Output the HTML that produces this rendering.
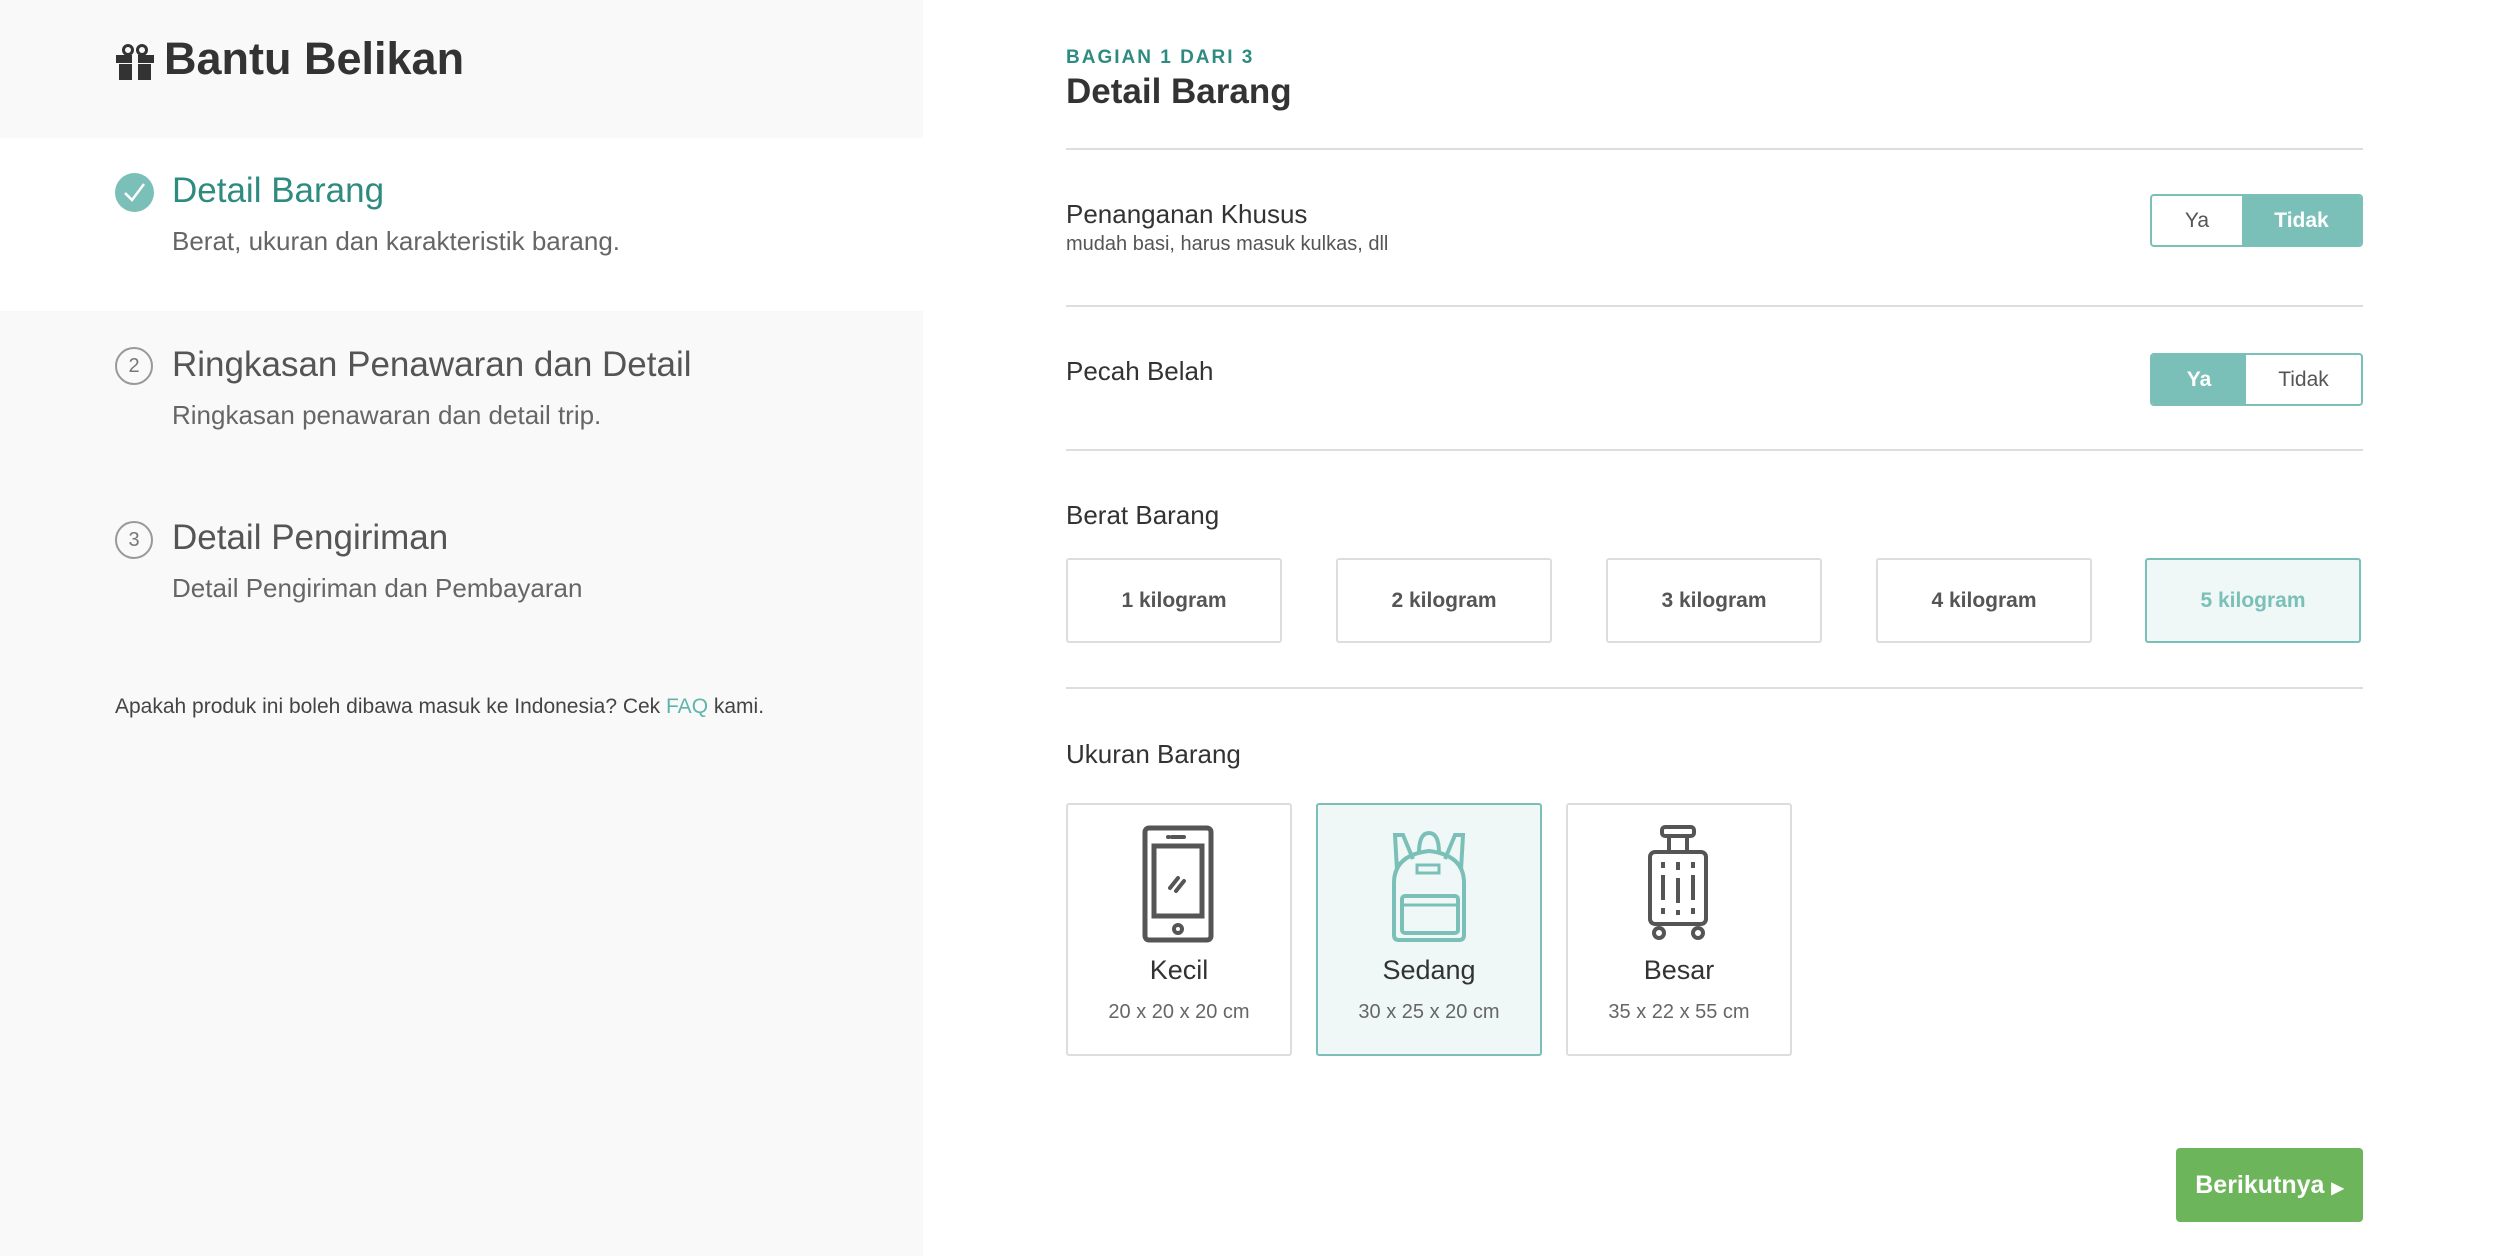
<!DOCTYPE html>
<html><head><meta charset="utf-8"><style>
*{margin:0;padding:0;box-sizing:border-box}
body{width:2514px;height:1256px;position:relative;background:#fff;font-family:"Liberation Sans",sans-serif;color:#333;overflow:hidden}
.a{position:absolute;white-space:nowrap}
.left{position:absolute;left:0;top:0;width:923px;height:1256px;background:#f9f9f9}
.act{position:absolute;left:0;top:138px;width:923px;height:173px;background:#fff}
.st{font-size:35px;color:#555}
.sub{font-size:26px;color:#666}
.num{position:absolute;width:38px;height:38px;border:2px solid #999;border-radius:50%;font-size:20px;color:#777;text-align:center;line-height:34px}
.hr{position:absolute;left:1066px;width:1297px;height:2px;background:#ddd}
.lbl{font-size:26px;color:#333}
.tg{position:absolute;left:2150px;width:213px;height:53px;border:2px solid #7bc0b8;border-radius:4px;overflow:hidden;display:flex;font-size:21px}
.tg div{text-align:center;line-height:49px;color:#555}
.tg .on{background:#7bc0b8;color:#fff;font-weight:bold}
.kg{position:absolute;top:558px;width:216px;height:85px;border:2px solid #ddd;border-radius:3px;text-align:center;line-height:81px;font-size:21px;font-weight:bold;color:#555}
.card{position:absolute;top:803px;width:226px;height:253px;border:2px solid #ddd;border-radius:3px;text-align:center}
.card .n{position:absolute;top:150px;left:0;right:0;font-size:27px;color:#333}
.card .d{position:absolute;top:196px;left:0;right:0;font-size:20px;color:#666}
.card svg{position:absolute;top:20px;left:50%;margin-left:-40px}
</style></head><body>
<div class="left"></div>
<div class="act"></div>
<svg class="a" style="left:115px;top:44px" width="40" height="36" viewBox="0 0 40 36"><rect x="1" y="11" width="38" height="8" fill="#333"/><rect x="4" y="20" width="32" height="16" fill="#333"/><rect x="17" y="11" width="6" height="25" fill="#f9f9f9"/><circle cx="13" cy="6" r="4.5" fill="none" stroke="#333" stroke-width="3"/><circle cx="27" cy="6" r="4.5" fill="none" stroke="#333" stroke-width="3"/></svg>
<div class="a" style="left:164px;top:33px;font-size:45px;font-weight:bold;color:#333">Bantu Belikan</div>
<svg class="a" style="left:115px;top:173px" width="39" height="39" viewBox="0 0 39 39"><circle cx="19.5" cy="19.5" r="19.5" fill="#7bc0b8"/><path d="M10 20 L17 27 L29 11" fill="none" stroke="#fff" stroke-width="2.5"/></svg>
<div class="a st" style="left:172px;top:171px;color:#2e8b80">Detail Barang</div>
<div class="a sub" style="left:172px;top:226px">Berat, ukuran dan karakteristik barang.</div>
<div class="num" style="left:115px;top:347px">2</div>
<div class="a st" style="left:172px;top:345px">Ringkasan Penawaran dan Detail</div>
<div class="a sub" style="left:172px;top:400px">Ringkasan penawaran dan detail trip.</div>
<div class="num" style="left:115px;top:521px">3</div>
<div class="a st" style="left:172px;top:518px">Detail Pengiriman</div>
<div class="a sub" style="left:172px;top:573px">Detail Pengiriman dan Pembayaran</div>
<div class="a" style="left:115px;top:695px;font-size:21px;color:#444">Apakah produk ini boleh dibawa masuk ke Indonesia? Cek <span style="color:#5fb5ab">FAQ</span> kami.</div>

<div class="a" style="left:1066px;top:47px;font-size:19px;font-weight:bold;color:#2e8b80;letter-spacing:2px">BAGIAN 1 DARI 3</div>
<div class="a" style="left:1066px;top:72px;font-size:35px;font-weight:bold;color:#333">Detail Barang</div>
<div class="hr" style="top:148px"></div>
<div class="a lbl" style="left:1066px;top:199px">Penanganan Khusus</div>
<div class="a" style="left:1066px;top:233px;font-size:20px;color:#555">mudah basi, harus masuk kulkas, dll</div>
<div class="tg" style="top:194px"><div style="width:90px">Ya</div><div class="on" style="flex:1">Tidak</div></div>
<div class="hr" style="top:305px"></div>
<div class="a lbl" style="left:1066px;top:356px">Pecah Belah</div>
<div class="tg" style="top:353px"><div class="on" style="width:94px">Ya</div><div style="flex:1">Tidak</div></div>
<div class="hr" style="top:449px"></div>
<div class="a lbl" style="left:1066px;top:500px">Berat Barang</div>
<div class="kg" style="left:1066px">1 kilogram</div>
<div class="kg" style="left:1336px">2 kilogram</div>
<div class="kg" style="left:1606px">3 kilogram</div>
<div class="kg" style="left:1876px">4 kilogram</div>
<div class="kg" style="left:2145px;border-color:#7bc0b8;background:#eff8f7;color:#7bc0b8">5 kilogram</div>
<div class="hr" style="top:687px"></div>
<div class="a lbl" style="left:1066px;top:739px">Ukuran Barang</div>

<div class="card" style="left:1066px"><svg width="80" height="118" viewBox="0 0 80 118"><rect x="6" y="3" width="66" height="112" rx="4" fill="none" stroke="#555" stroke-width="5"/><rect x="15" y="21" width="48" height="70" fill="none" stroke="#555" stroke-width="5"/><circle cx="39" cy="104" r="4" fill="none" stroke="#555" stroke-width="4"/><path d="M33 12h12M29 12h1" stroke="#555" stroke-width="4" stroke-linecap="round"/><path d="M31 63l8-10M37 66l8-10" stroke="#555" stroke-width="4" stroke-linecap="round"/></svg><div class="n">Kecil</div><div class="d">20 x 20 x 20 cm</div></div>
<div class="card" style="left:1316px;border-color:#7bc0b8;background:#eff8f7"><svg width="80" height="118" viewBox="0 0 80 118"><path d="M5 110V58Q5 30 40 26Q75 30 75 58V110Q75 115 70 115H10Q5 115 5 110Z" fill="none" stroke="#7bc0b8" stroke-width="4"/><path d="M8 45L6 10h8l10 24M72 45L74 10h-8L56 34M30 28Q30 8 40 8Q50 8 50 28" fill="none" stroke="#7bc0b8" stroke-width="4"/><rect x="28" y="40" width="22" height="8" fill="none" stroke="#7bc0b8" stroke-width="3"/><rect x="13" y="71" width="56" height="37" rx="3" fill="none" stroke="#7bc0b8" stroke-width="4"/><path d="M13 80H69" stroke="#7bc0b8" stroke-width="3"/></svg><div class="n">Sedang</div><div class="d">30 x 25 x 20 cm</div></div>
<div class="card" style="left:1566px"><svg width="80" height="118" viewBox="0 0 80 118"><rect x="23" y="2" width="32" height="9" rx="3" fill="none" stroke="#555" stroke-width="4"/><path d="M30 11v16M48 11v16" stroke="#555" stroke-width="4"/><rect x="11" y="27" width="56" height="72" rx="5" fill="none" stroke="#555" stroke-width="4"/><path d="M24 37v6M24 50v25M24 83v6M39 37v8M39 53v25M39 85v5M54 37v6M54 50v25M54 83v6" stroke="#555" stroke-width="4"/><circle cx="20" cy="108" r="5" fill="none" stroke="#555" stroke-width="4"/><circle cx="59" cy="108" r="5" fill="none" stroke="#555" stroke-width="4"/></svg><div class="n">Besar</div><div class="d">35 x 22 x 55 cm</div></div>

<div class="a" style="left:2176px;top:1148px;width:187px;height:74px;background:#6db55b;border-radius:4px;color:#fff;font-weight:bold;font-size:25px;line-height:74px;text-align:center">Berikutnya <span style="font-size:16px">▶</span></div>
</body></html>
